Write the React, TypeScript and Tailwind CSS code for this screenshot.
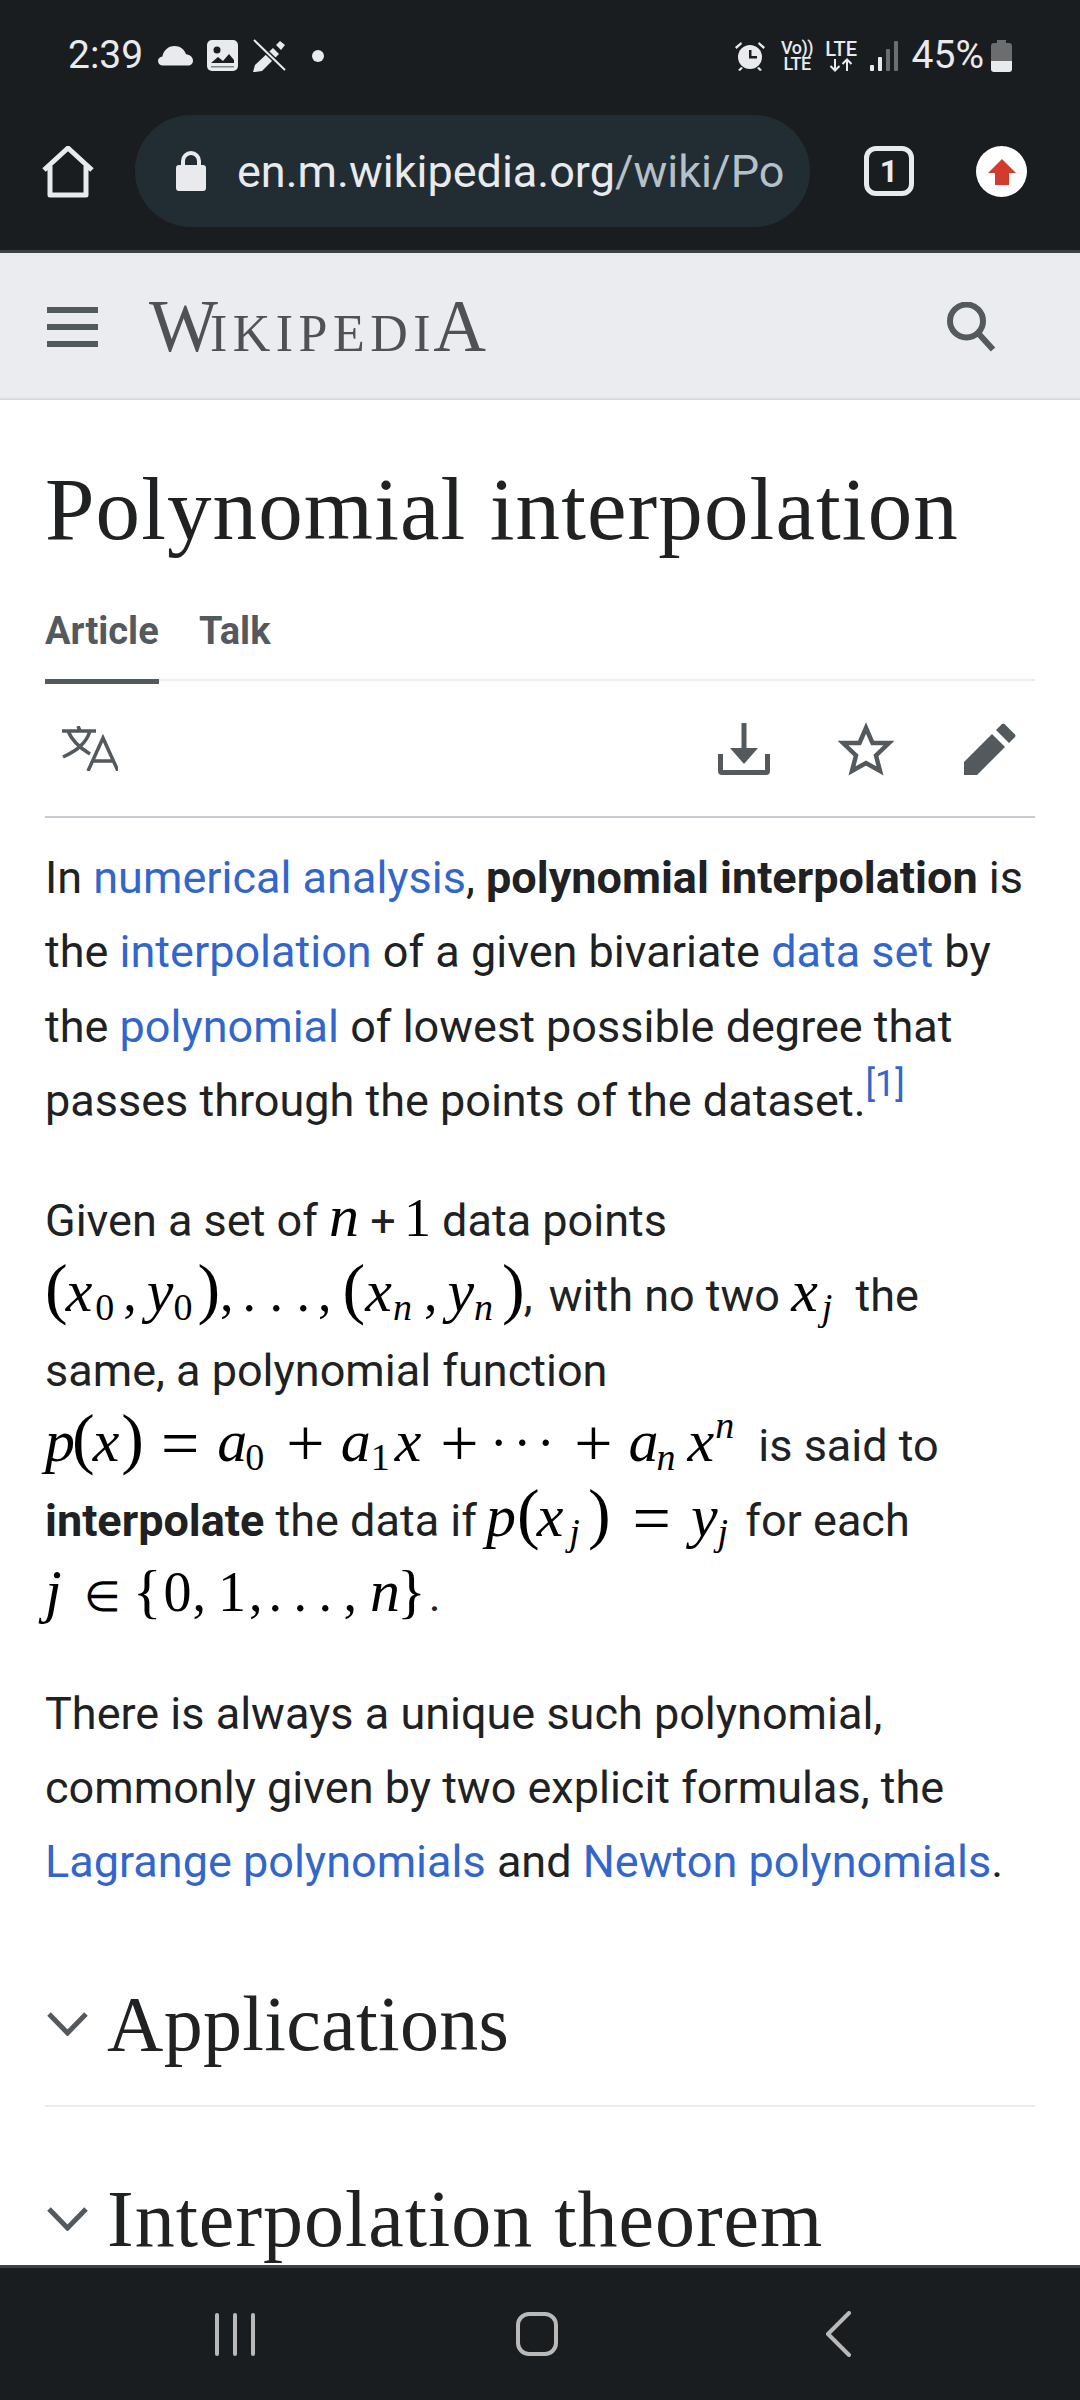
import React from "react";

const roboto = { fontFamily: "Roboto, sans-serif" };

function Cm({ children, className = "" }: { children: React.ReactNode; className?: string }) {
  return <span className={`font-['Liberation_Serif',serif] text-[54px] leading-[0] text-black ${className}`}>{children}</span>;
}

// bigger operators, pulled down a little to sit on the math axis
function Op({ children, className = "" }: { children: string; className?: string }) {
  return <span className={`relative top-[5px] font-['Liberation_Serif',serif] text-[68px] leading-[0] text-black ${className}`}>{children}</span>;
}

function V({ children, className = "" }: { children: React.ReactNode; className?: string }) {
  return <i className={`font-['Liberation_Serif',serif] text-[60px] leading-[0] text-black ${className}`}>{children}</i>;
}

function Sub({ children, italic, className = "" }: { children: React.ReactNode; italic?: boolean; className?: string }) {
  return (
    <span className={`relative top-[9px] text-[38px] leading-[0] text-black font-['Liberation_Serif',serif] ${italic ? "italic" : ""} ${className}`}>
      {children}
    </span>
  );
}

function Link({ children }: { children: React.ReactNode }) {
  return <span className="text-[#3366cc]">{children}</span>;
}

function Paren({ children, className = "" }: { children: string; className?: string }) {
  return <span className={`font-['Liberation_Serif',serif] text-[68px] leading-[0] text-black ${className}`}>{children}</span>;
}

function StatusBar() {
  return (
    <div className="flex h-[115px] items-center justify-between pb-[4px] pl-[68px] pr-[68px] text-[#e8eaed]">
      <div className="flex items-center">
        <span className="text-[39px] leading-none">2:39</span>
        <svg className="ml-[15px]" width="35" height="22" viewBox="0 0 35 22" fill="#e8eaed">
          <path d="M5 20.500C2 20.500 0 18.600 0 16c0-2.500 1.900-4.400 4.400-4.600C5.300 6 10 1 16.500 1c5.500 0 10 3.400 11.500 8.300 4 .2 7 3.300 7 6.400 0 3-2.200 4.800-5 4.800z" />
        </svg>
        <svg className="ml-[14px]" width="31" height="31" viewBox="0 0 31 31">
          <rect width="31" height="31" rx="5" fill="#e8eaed" />
          <circle cx="10" cy="10" r="3.500" fill="#1a1d20" />
          <path d="M4 23l7-6 5 4 6-7 5 6v3H4z" fill="#1a1d20" />
          <rect x="4" y="26" width="23" height="1.500" fill="#1a1d20" opacity=".5" />
        </svg>
        <svg className="ml-[14px]" width="34" height="34" viewBox="0 0 34 34" fill="none">
          <path d="M1 33l2-7L21 9l6 6-17 17-7 1z" fill="#e8eaed" />
          <path d="M24 6l4-4 5 4-4 5z" fill="#e8eaed" />
          <path d="M3 2l30 29" stroke="#1a1d20" strokeWidth="5" />
          <path d="M2 1l31 30" stroke="#e8eaed" strokeWidth="2" />
        </svg>
        <span className="ml-[26px] h-[12px] w-[12px] rounded-full bg-[#e8eaed]" />
      </div>
      <div className="flex items-center">
        <svg width="30" height="30" viewBox="0 0 30 30" fill="#e8eaed">
          <circle cx="15" cy="16" r="12" />
          <path d="M6 1L0 6l1.500 2L7 3zM24 1l6 5-1.500 2L23 3zM6 26l-3 3 2 1 3-3zM24 26l3 3-2 1-3-3z" />
          <path d="M14 9h2.500v6H22v2.500h-8z" fill="#1a1d20" />
        </svg>
        <div className="ml-[17px] flex w-[31px] flex-col items-center text-[18px] leading-[16px] font-medium tracking-[-0.5px]">
          <span>Vo))</span>
          <span>LTE</span>
        </div>
        <div className="ml-[12px] flex w-[33px] flex-col items-center">
          <span className="text-[20px] leading-[18px] font-medium">LTE</span>
          <svg width="24" height="14" viewBox="0 0 24 14" fill="none" stroke="#e8eaed" strokeWidth="2">
            <path d="M6 1v11M1.500 8l4.500 4.500L10.500 8M18 13V2M13.500 6L18 1.500 22.500 6" />
          </svg>
        </div>
        <svg className="ml-[12px]" width="28" height="30" viewBox="0 0 28 30">
          <rect x="0" y="24" width="4" height="6" rx="1" fill="#e8eaed" />
          <rect x="8" y="16" width="4" height="14" rx="1" fill="#e8eaed" />
          <rect x="16" y="8" width="4" height="22" rx="1" fill="#6b6e70" />
          <rect x="24" y="0" width="4" height="30" rx="1" fill="#6b6e70" />
        </svg>
        <span className="ml-[14px] text-[39px] leading-none">45%</span>
        <svg className="ml-[7px]" width="21" height="32" viewBox="0 0 21 32">
          <path d="M6 0h9v3h3a3 3 0 013 3v15H0V6a3 3 0 013-3h3z" fill="#6b6d6f" />
          <path d="M0 21h21v8a3 3 0 01-3 3H3a3 3 0 01-3-3z" fill="#e8eaed" />
        </svg>
      </div>
    </div>
  );
}

function Toolbar() {
  return (
    <div className="flex h-[138px] border-b-[3px] border-[#3c4146] pl-[42px]">
      <svg className="mt-[31px]" width="52" height="52" viewBox="0 0 52 52" fill="none" stroke="#e8eaed" strokeWidth="5" strokeLinejoin="round">
        <path d="M2 24L26 2l24 22M8 20v29h36V20" />
      </svg>
      <div className="ml-[41px] flex h-[112px] w-[675px] items-center rounded-full bg-[#222d33] pl-[41px]">
        <svg width="30" height="40" viewBox="0 0 30 40" fill="none">
          <path d="M7 17V10a8 8 0 0116 0v7" stroke="#e8eaed" strokeWidth="4" />
          <rect y="14" width="30" height="26" rx="3" fill="#e8eaed" />
        </svg>
        <span className="ml-[31px] text-[45px] leading-none whitespace-nowrap">
          <span className="text-[#e8eaed]">en.m.wikipedia.org</span>
          <span className="text-[#b6c0c8]">/wiki/Po</span>
        </span>
      </div>
      <div className="ml-[54px] mt-[31px] flex h-[50px] w-[50px] items-center justify-center rounded-[12px] border-[5px] border-[#e8eaed] text-[32px] leading-none font-bold text-[#e8eaed]">
        1
      </div>
      <div className="ml-[62px] mt-[31px] flex h-[51px] w-[51px] items-center justify-center rounded-full bg-white">
        <svg width="28" height="26" viewBox="0 0 28 26" fill="#d33b2c">
          <path d="M14 0l14 14h-7v12H7V14H0z" />
        </svg>
      </div>
    </div>
  );
}

function WikiHeader() {
  return (
    <div className="flex h-[147px] items-center bg-[#eaecf0] pl-[47px] pr-[83px] shadow-[inset_0_-3px_3px_-2px_rgba(0,0,0,0.12)]">
      <div className="flex h-[40px] w-[51px] flex-col justify-between">
        <span className="h-[6px] bg-[#54595d]" />
        <span className="h-[6px] bg-[#54595d]" />
        <span className="h-[6px] bg-[#54595d]" />
      </div>
      <div className="ml-[51px] font-['Liberation_Serif',serif] text-[73px] leading-none text-[#4f5154] whitespace-nowrap">
        W<span className="-ml-[8px] text-[52px] tracking-[5.500px]">IKIPEDI</span>
        <span className="-ml-[3px]">A</span>
      </div>
      <svg className="ml-auto" width="50" height="50" viewBox="0 0 50 50" fill="none" stroke="#54595d" strokeWidth="6">
        <circle cx="19.500" cy="19" r="16.500" />
        <path d="M31 31l15 16.500" />
      </svg>
    </div>
  );
}

function PageActions() {
  return (
    <div className="flex h-[137px] items-center border-b-[2px] border-[#c8ccd1] pl-[17px] pr-[19px]">
      <svg width="56" height="45" viewBox="0 0 56 45" fill="none" stroke="#54595d" strokeWidth="3.500">
        <path d="M0 5h34M16 0l2 5M28 5C24 18 14 25 1 31M6 5c4 10 12 17 22 23" />
        <path d="M26 45l15-33 15 33M31 35h20" />
      </svg>
      <div className="ml-auto flex items-center">
        <svg width="52" height="52" viewBox="0 0 52 52" fill="#54595d">
          <path d="M23.500 0h5v25H40L26 41 12 25h11.500z" />
          <path d="M0 31h5v16h42V31h5v17a4 4 0 01-4 4H4a4 4 0 01-4-4z" />
        </svg>
        <svg className="ml-[68px]" width="56" height="54" viewBox="0 0 56 54" fill="none" stroke="#54595d" strokeWidth="4.500">
          <path d="M28 6l6.500 15H51L38 33.500 42 49 28 41 14 49l4-15.500L5 21h16.500z" />
        </svg>
        <svg className="ml-[70px]" width="52" height="52" viewBox="0 0 52 52" fill="#54595d">
          <path d="M0 39L28 11l13 13-28 28H0z" />
          <path d="M32 7l6-6a2 2 0 012.500 0l10.500 10.500a2 2 0 010 2.500l-6 6z" />
        </svg>
      </div>
    </div>
  );
}

function SectionHeading({ title, className }: { title: string; className: string }) {
  return (
    <div className="flex h-[90px] items-center">
      <svg className="ml-[2px] shrink-0" width="41" height="24" viewBox="0 0 41 24" fill="none" stroke="#54595d" strokeWidth="5">
        <path d="M2 2l18.500 19L39 2" />
      </svg>
      <h2 className={`font-['Liberation_Serif',serif] leading-none text-[#202122] whitespace-nowrap ${className}`}>{title}</h2>
    </div>
  );
}

export default function App() {
  return (
    <div className="flex h-[2400px] w-[1080px] flex-col overflow-hidden bg-[#1a1d20]" style={roboto}>
      <StatusBar />
      <Toolbar />
      <WikiHeader />
      <main className="h-[1865px] overflow-hidden bg-white text-[#202122]">
        <div className="mx-[45px]">
          <h1 className="pt-[62px] font-['Liberation_Serif',serif] text-[89px] leading-[94px] tracking-[1.100px] whitespace-nowrap">Polynomial interpolation</h1>
          <div className="mt-[53px] flex h-[72px] items-start border-b-[2px] border-[#eaecf0] text-[38px] leading-[44px] font-bold text-[#54595d]">
            <span className="relative h-[72px] w-[114px]">
              Article
              <span className="absolute inset-x-0 bottom-[-3px] h-[5px] bg-[#54595d]" />
            </span>
            <span className="ml-[40px]">Talk</span>
          </div>
          <PageActions />
          <div className="text-[45px] leading-[74.400px]">
            <p className="mt-[23px]">
              In <Link>numerical analysis</Link>, <b>polynomial interpolation</b> is the <Link>interpolation</Link> of a given bivariate <Link>data set</Link> by the <Link>polynomial</Link> of lowest possible degree that passes through the points of the dataset.
              <sup className="relative -top-[4px] text-[36px] leading-[0] align-super"><Link>[1]</Link></sup>
            </p>
            <div className="mt-[44px] leading-[75px]">
              <p>
                Given a set of <V>n</V> + <Cm className="-ml-[3px] text-[50px]">1</Cm> data points
              </p>
              <p>
                <Paren>(</Paren><V className="-ml-[2px]">x</V><Sub className="ml-[3px]">0</Sub><Cm className="ml-[9px]">,</Cm><V className="ml-[10px]">y</V><Sub>0</Sub><Paren className="ml-[5px]">)</Paren><Cm>,</Cm><Cm className="ml-[9px]">. . .</Cm><Cm className="ml-[8px]">,</Cm><Paren className="ml-[11px]">(</Paren><V>x</V><Sub italic className="ml-[1px]">n</Sub><Cm className="ml-[12px]">,</Cm><V className="ml-[10px]">y</V><Sub italic>n</Sub><Paren className="ml-[9px]">)</Paren><span className="-ml-[1px]">,</span> <span className="ml-[5px]">with no two</span> <V>x</V><Sub italic className="ml-[4px]">j</Sub> <span className="ml-[12px]">the</span>
              </p>
              <p>same, a polynomial function</p>
              <p>
                <V>p</V><Paren className="-ml-[3px]">(</Paren><V className="-ml-[2px]">x</V><Paren className="ml-[2px]">)</Paren><Op className="ml-[17px]">=</Op><V className="ml-[18px]">a</V><Sub className="-ml-[2px]">0</Sub><Op className="ml-[22px]">+</Op><V className="ml-[16px]">a</V><Sub>1</Sub><V className="ml-[5px]">x</V><Op className="ml-[19px]">+</Op><Cm className="ml-[11px] tracking-[5.500px]">···</Cm><Op className="ml-[14px]">+</Op><V className="ml-[16px]">a</V><Sub italic className="-ml-[2px]">n</Sub><V className="ml-[12px]">x</V><span className="relative -top-[23px] ml-[1px] font-['Liberation_Serif',serif] text-[38px] leading-[0] italic text-black">n</span> <span className="ml-[13px]">is said to</span>
              </p>
              <p>
                <b>interpolate</b> the data if <V className="-ml-[2px]">p</V><Paren className="ml-[1px]">(</Paren><V className="-ml-[3px]">x</V><Sub italic className="ml-[6px]">j</Sub><Paren className="ml-[8px]">)</Paren><Op className="ml-[22px]">=</Op><V className="ml-[20px]">y</V><Sub italic>j</Sub> <span className="ml-[6px]">for each</span>
              </p>
              <p>
                <V>j</V><span className="ml-[22px] inline-block w-[36px] text-center font-['Liberation_Serif',serif] text-[42px] leading-[0] text-black">∈</span><Cm className="ml-[13px] text-[60px]">{"{"}</Cm><Cm className="ml-[2px] text-[56px]">0</Cm><Cm className="ml-[1px]">,</Cm><Cm className="ml-[12px] text-[56px]">1</Cm><Cm className="ml-[3px]">,</Cm><Cm className="ml-[6px] tracking-[11.500px]">...</Cm><Cm>,</Cm><V className="ml-[13px]">n</V><Cm className="-ml-[3px] text-[60px]">{"}"}</Cm><span className="ml-[3px]">.</span>
              </p>
            </div>
            <p className="mt-[44px]">
              There is always a unique such polynomial, commonly given by two explicit formulas, the <Link>Lagrange polynomials</Link> and <Link>Newton polynomials</Link>.
            </p>
          </div>
          <div className="mt-[79px] border-b-[2px] border-[#eaecf0] pb-[36px]">
            <SectionHeading title="Applications" className="ml-[19px] text-[78px] tracking-[0.3px]" />
          </div>
          <div className="mt-[67px]">
            <SectionHeading title="Interpolation theorem" className="ml-[19px] text-[80px] tracking-[1px]" />
          </div>
        </div>
      </main>
      <nav className="flex h-[135px] items-center border-t-[3px] border-[#3c4146] bg-[#1a1d20]">
        <div className="ml-[215px] flex h-[43px] w-[40px] justify-between">
          <span className="w-[4px] rounded bg-[#b9b9b9]" />
          <span className="w-[4px] rounded bg-[#b9b9b9]" />
          <span className="w-[4px] rounded bg-[#b9b9b9]" />
        </div>
        <span className="ml-[261px] h-[44px] w-[42px] rounded-[13px] border-[4px] border-[#b9b9b9]" />
        <svg className="ml-[267px]" width="26" height="46" viewBox="0 0 26 46" fill="none" stroke="#b9b9b9" strokeWidth="4" strokeLinecap="round" strokeLinejoin="round">
          <path d="M24 2L3 23l21 21" />
        </svg>
      </nav>
    </div>
  );
}
